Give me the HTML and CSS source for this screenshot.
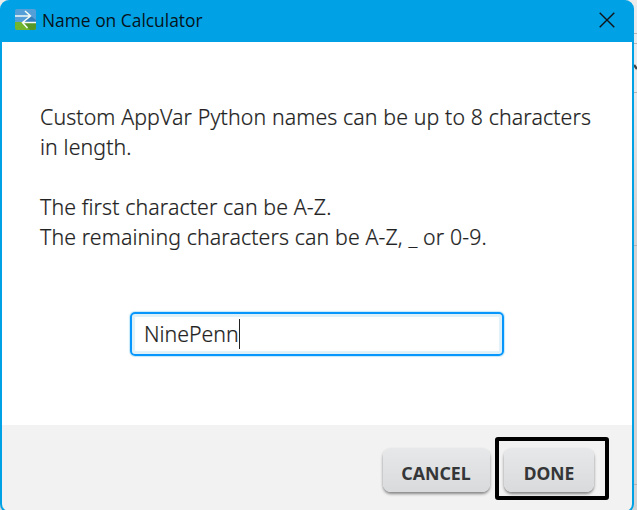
FILE: index.html
```
<!DOCTYPE html>
<html lang="en">
<head>
<meta charset="utf-8">
<title>Name on Calculator</title>
<link rel="stylesheet" href="styles.css">
</head>
<body>
<div class="screen">
  <section class="dialog">
    <header class="titlebar">
      <svg class="app-icon" width="21" height="21" viewBox="0 0 21 21">
        <defs><clipPath id="tile"><rect width="21" height="21" rx="2"/></clipPath></defs>
        <g clip-path="url(#tile)">
          <rect width="21" height="21" fill="#559fd9"/>
          <path d="M16 7L21 11V13H7Z" fill="#347fbd"/>
          <path d="M0 13H21V21H0Z" fill="#71b62e"/>
          <path d="M8 14L13 19L15 21H21V14Z" fill="#559827"/>
          <path d="M0 7H15.5M10 2L15.5 7L7.5 13.5L12.5 19M7.5 13.5H21" fill="none" stroke="#f5fbf5" stroke-width="1.5"/>
        </g>
      </svg>
      <span class="title">Name on Calculator</span>
      <svg class="close" width="16" height="16" viewBox="0 0 16 16"><path d="M.7.7L15.3 15.3M15.3.7L.7 15.3" stroke="#101418" stroke-width="1.4"/></svg>
    </header>
    <main class="content">
      <div class="message">
        <p class="line first">Custom AppVar Python names can be up to 8 characters</p>
        <p class="line">in length.</p>
        <p class="line gap">The first character can be A-Z.</p>
        <p class="line">The remaining characters can be A-Z, _ or 0-9.</p>
      </div>
      <div class="field"><span class="value">NinePenn</span><span class="caret"></span></div>
    </main>
    <footer class="actions">
      <button class="button cancel">CANCEL</button>
      <div class="highlight"><button class="button done">DONE</button></div>
    </footer>
  </section>
  <aside class="backdrop">
    <svg width="3" height="510" viewBox="0 0 3 510">
      <path d="M0 33.5H3M0 43.5H3M0 92.5H3M0 245.5H3M0 484.5H3" stroke="#b4b4b4"/>
      <path d="M0 65L3 69" stroke="#444" stroke-width="2.5"/>
    </svg>
  </aside>
</div>
</body>
</html>
```
FILE: styles.css
```
* { box-sizing: border-box; }
body { margin: 0; overflow: hidden; }
.screen {
  display: flex;
  width: 637px;
  height: 510px;
  overflow: hidden;
  background: linear-gradient(#ececec, #e9e9e9 95px, #d3d3d3 220px, #d3d3d3);
  font-family: "Noto Sans", "Open Sans", sans-serif;
}
.dialog {
  display: flex;
  flex-direction: column;
  width: 634px;
  height: 513px;
  flex: none;
  border: 2px solid #00a2e5;
  border-top: 0;
  border-radius: 9px;
  background: #00a2e5;
  overflow: hidden;
}
.backdrop { width: 3px; }
.backdrop svg { display: block; }
.titlebar {
  display: flex;
  align-items: center;
  flex: none;
  height: 42px;
  padding: 0 17px 3px 13px;
}
.app-icon { margin-right: 6px; }
.title {
  font-family: "Open Sans", sans-serif;
  font-size: 17.4px;
  line-height: 24px;
  color: #07131b;
  white-space: nowrap;
}
.close { margin-left: auto; }
.content {
  flex: none;
  height: 383px;
  padding: 60px 38px 0;
  background: #fff;
}
.message {
  font-size: 21.3px;
  font-weight: 300;
  line-height: 30px;
  letter-spacing: .12px;
  color: #222;
  -webkit-text-stroke: .2px #222;
}
.line { margin: 0; white-space: nowrap; }
.gap { margin-top: 30px; }
.field {
  display: flex;
  align-items: center;
  width: 374px;
  height: 44px;
  margin: 60px 0 0 90px;
  padding-left: 12px;
  border: 2px solid #0796fb;
  border-radius: 5px;
  box-shadow: 0 0 1px 1px #c4e9fa, inset 0 0 1px 3px #dff1f8;
  font-size: 21.3px;
  font-weight: 300;
  color: #222;
  -webkit-text-stroke: .2px #222;
}
.value { line-height: 28px; margin-bottom: 1px; }
.caret { width: 1px; height: 30px; background: #222; }
.actions {
  display: flex;
  flex: 1;
  align-items: flex-start;
  padding: 12px 22px 0 381px;
  background: #f2f2f2;
}
.button {
  display: block;
  height: 44px;
  padding: 6px 0 0;
  border: 0;
  border-radius: 8px;
  background: linear-gradient(#e7e8e9, #d9dadc);
  box-shadow: 0 2px 3px #858585;
  font: 700 17.5px "Noto Sans", "Open Sans", sans-serif;
  color: #343638;
}
.cancel { width: 107px; margin: 11px 5px 0 0; padding-right: 1px; font-size: 17.8px; }
.done { width: 90px; }
.highlight {
  width: 114px;
  height: 63px;
  padding: 7px 0 0 5px;
  border: 4px solid #000;
  border-radius: 3px;
}
```
